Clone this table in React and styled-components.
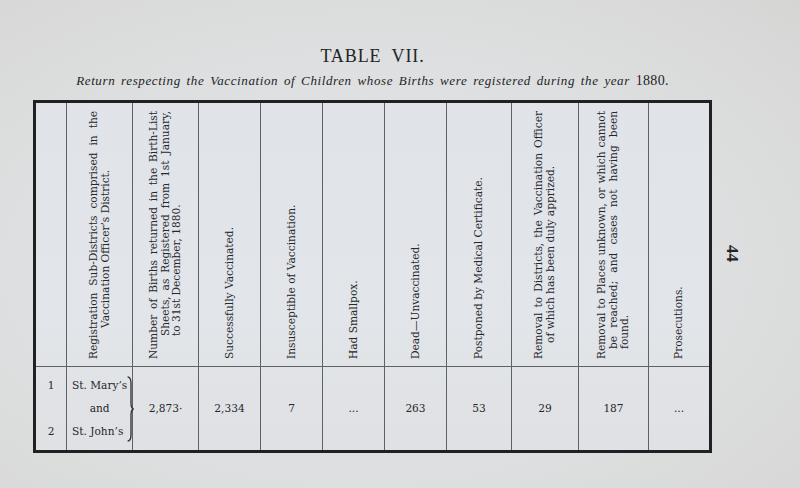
import React from "react";
import styled, { createGlobalStyle } from "styled-components";

const Global = createGlobalStyle`
  html, body { margin: 0; padding: 0; }
  body {
    width: 800px;
    height: 488px;
    overflow: hidden;
    background:
      radial-gradient(ellipse at 45% 55%, #e2e4e6 0%, #dedfe0 55%, #d5d6d4 100%);
    color: #26282b;
  }
`;

const Page = styled.div`
  display: flex;
  align-items: flex-start;
  padding-left: 33px;
`;

const Sheet = styled.div`
  width: 679px;
  display: flex;
  flex-direction: column;
  align-items: center;
  padding-top: 46px;
`;

const Title = styled.h1`
  margin: 0;
  font-family: "Liberation Serif", "Times New Roman", serif;
  font-weight: normal;
  font-size: 18px;
  line-height: 20px;
  letter-spacing: 0.9px;
  word-spacing: 5px;
  color: #222427;
`;

const Subtitle = styled.p`
  margin: 6px 0 10px;
  font-family: "Liberation Serif", "Times New Roman", serif;
  font-style: italic;
  font-size: 13px;
  line-height: 18px;
  letter-spacing: 0.6px;
  word-spacing: 2px;
  color: #222427;
`;

const Upright = styled.span`
  font-style: normal;
  font-size: 14px;
  letter-spacing: 0.3px;
`;

const Table = styled.div`
  align-self: stretch;
  display: grid;
  grid-template-columns: 31px 66px 66px 62px 62px 62px 62px 65px 67px 70px 1fr;
  grid-template-rows: 264px 83px;
  border: 3px solid #1f2123;
  background: linear-gradient(180deg, #e0e3e8 0%, #e2e5e9 60%, #dfe1e4 100%);
  font-family: "DejaVu Serif", serif;
  color: #25272b;
`;

const HeadCell = styled.div`
  box-sizing: border-box;
  display: flex;
  justify-content: center;
  align-items: center;
  border-right: ${p => (p.$last ? "none" : "1px solid #5e6267")};
  border-bottom: 1px solid #5e6267;
`;

const Label = styled.div`
  writing-mode: vertical-rl;
  transform: rotate(180deg);
  height: 248px;
  font-size: 10.6px;
  line-height: 11.6px;
`;

const Line = styled.div`
  padding-inline-start: ${p => p.$indent || 0}px;
  text-align: justify;
  text-align-last: ${p => (p.$full ? "justify" : "start")};
`;

const BodyCell = styled.div`
  box-sizing: border-box;
  display: flex;
  justify-content: ${p => (p.$start ? "flex-start" : "center")};
  align-items: center;
  padding-left: ${p => (p.$start ? "5px" : "0")};
  border-right: ${p => (p.$last ? "none" : "1px solid #5e6267")};
  font-size: 10.6px;
`;

const Stack = styled.div`
  display: flex;
  flex-direction: column;
  align-items: ${p => (p.$left ? "flex-start" : "center")};
`;

const Entry = styled.div`
  height: 23px;
  line-height: 23px;
  align-self: ${p => (p.$center ? "center" : "auto")};
  white-space: nowrap;
`;

const Value = styled.span`
  line-height: 23px;
`;

const BraceMark = styled.svg`
  flex-shrink: 0;
  margin-left: 0;
  display: block;
`;

const Folio = styled.div`
  margin: 245px 0 0 12px;
  writing-mode: vertical-rl;
  font-family: "Liberation Serif", "Times New Roman", serif;
  font-weight: bold;
  font-size: 17px;
  line-height: 17px;
  color: #222427;
`;

const Brace = () => (
  <BraceMark width="7" height="66" viewBox="0 0 7 66">
    <path
      d="M0.6 0.8 Q4 1.2 4 7 L4 27 Q4 32.4 6.6 33 Q4 33.6 4 39 L4 59 Q4 64.8 0.6 65.2"
      fill="none"
      stroke="#2a2c30"
      strokeWidth="1.3"
    />
  </BraceMark>
);

const headers = [
  { lines: [] },
  {
    lines: [
      { text: "Registration Sub-Districts comprised in the", full: true },
      { text: "Vaccination Officer\u2019s District.", indent: 31 },
    ],
  },
  {
    lines: [
      { text: "Number of Births returned in the Birth-List", full: true },
      { text: "Sheets, as Registered from 1st January,", full: true, indent: 23 },
      { text: "to 31st December, 1880.", indent: 23 },
    ],
  },
  { lines: [{ text: "Successfully Vaccinated." }] },
  { lines: [{ text: "Insusceptible of Vaccination." }] },
  { lines: [{ text: "Had Smallpox." }] },
  { lines: [{ text: "Dead\u2014Unvaccinated." }] },
  { lines: [{ text: "Postponed by Medical Certificate." }] },
  {
    lines: [
      { text: "Removal to Districts, the Vaccination Officer", full: true },
      { text: "of which has been duly apprized.", indent: 16 },
    ],
  },
  {
    lines: [
      { text: "Removal to Places unknown, or which cannot", full: true },
      { text: "be reached; and cases not having been", full: true, indent: 10 },
      { text: "found.", indent: 10 },
    ],
  },
  { lines: [{ text: "Prosecutions." }] },
];

const values = ["2,873\u00b7", "2,334", "7", "...", "263", "53", "29", "187", "..."];

export default function App() {
  return (
    <>
      <Global />
      <Page>
        <Sheet>
          <Title>TABLE VII.</Title>
          <Subtitle>
            Return respecting the Vaccination of Children whose Births were registered during the year{" "}
            <Upright>1880.</Upright>
          </Subtitle>
          <Table>
            {headers.map((h, i) => (
              <HeadCell key={i} $last={i === headers.length - 1}>
                {h.lines.length > 0 && (
                  <Label>
                    {h.lines.map((l, j) => (
                      <Line key={j} $full={l.full} $indent={l.indent}>
                        {l.text}
                      </Line>
                    ))}
                  </Label>
                )}
              </HeadCell>
            ))}

            <BodyCell>
              <Stack>
                <Entry>1</Entry>
                <Entry />
                <Entry>2</Entry>
              </Stack>
            </BodyCell>
            <BodyCell $start>
              <Stack $left>
                <Entry>St. Mary&rsquo;s</Entry>
                <Entry $center>and</Entry>
                <Entry>St. John&rsquo;s</Entry>
              </Stack>
              <Brace />
            </BodyCell>
            {values.map((v, i) => (
              <BodyCell key={i} $last={i === values.length - 1}>
                <Value>{v}</Value>
              </BodyCell>
            ))}
          </Table>
        </Sheet>
        <Folio>44</Folio>
      </Page>
    </>
  );
}
